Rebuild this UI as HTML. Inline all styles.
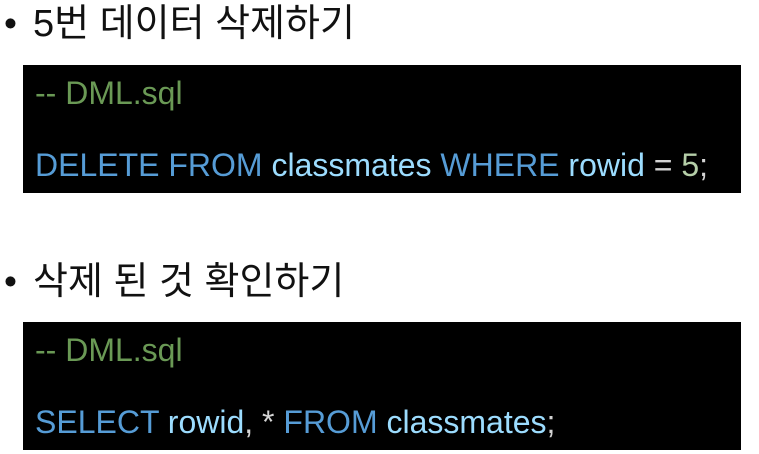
<html><head><style>
body{margin:0;width:759px;height:454px;background:#fff;position:relative;overflow:hidden;font-family:"Liberation Sans","Noto Sans CJK KR",sans-serif}
.h{position:absolute;left:33px;font-size:38px;color:#111;line-height:1;font-family:"Liberation Sans","Noto Sans CJK KR",sans-serif;white-space:nowrap}
.b{position:absolute;left:4px;font-size:37px;color:#111;line-height:1}
.box{position:absolute;left:23px;width:718px;height:128px;background:#000}
.l{position:absolute;left:12px;font-size:32px;line-height:1;white-space:nowrap}
.c{color:#6a9955}.k{color:#569cd6}.v{color:#9cdcfe}.n{color:#b5cea8}.w{color:#d4d4d4}
</style></head><body>
<div class="b" style="top:5px">•</div><div class="h" style="top:5px">5번 데이터 삭제하기</div>
<div class="box" style="top:65px">
<div class="l c" style="top:12px">-- DML.sql</div>
<div class="l" style="top:84px"><span class="k">DELETE FROM</span> <span class="v">classmates</span> <span class="k">WHERE</span> <span class="v">rowid</span> <span class="w">=</span> <span class="n">5</span><span class="w">;</span></div>
</div>
<div class="b" style="top:263px">•</div><div class="h" style="top:263px">삭제 된 것 확인하기</div>
<div class="box" style="top:322px">
<div class="l c" style="top:12px">-- DML.sql</div>
<div class="l" style="top:84px"><span class="k">SELECT</span> <span class="v">rowid</span><span class="w">, *</span> <span class="k">FROM</span> <span class="v">classmates</span><span class="w">;</span></div>
</div>
</body></html>
